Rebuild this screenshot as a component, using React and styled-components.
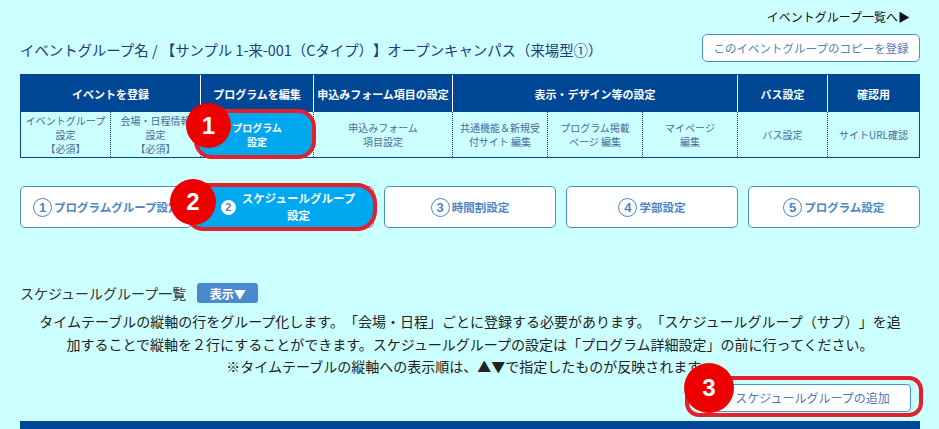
import React from 'react'
import styled, { createGlobalStyle } from 'styled-components';

const GlobalStyle = createGlobalStyle`
  html, body {
    margin: 0;
    padding: 0;
    background: #ccffff;
  }
  body {
    font-family: "Noto Sans CJK JP", "Noto Sans", sans-serif;
    color: #222;
    text-spacing-trim: space-all;
  }
`;

const Page = styled.div`
  width: 900px;
  padding: 9px 19px 0 20px;
  height: 420px;
  overflow: hidden;
`;

const TopLinkRow = styled.div`
  text-align: right;
  padding-right: 10px;
  font-size: 12px;
  line-height: 16px;
  color: #111;
`;

const TitleRow = styled.div`
  display: flex;
  justify-content: space-between;
  align-items: flex-end;
  margin-top: 9px;
`;

const Title = styled.h1`
  margin: 0 0 1px;
  font-size: 14.4px;
  font-weight: 400;
  line-height: 22px;
  color: #1e3a78;
`;

const CopyButton = styled.button`
  width: 218px;
  height: 28px;
  background: #fff;
  border: 1px solid #4a8ed0;
  border-radius: 5px;
  color: #5a7ab8;
  font-family: inherit;
  font-size: 11.5px;
  padding: 0;
`;

const NavTable = styled.div`
  margin-top: 12px;
  display: grid;
  grid-template-columns: 90px 90px 113px 139px 95px 95px 95px 90px 1fr;
  grid-template-rows: 37px 45px;
  border: 1.5px solid #004896;
`;

const HeadCell = styled.div`
  grid-column: span ${p => p.span || 1};
  background: #004896;
  color: #fff;
  font-size: 11px;
  font-weight: 700;
  white-space: nowrap;
  display: flex;
  align-items: center;
  justify-content: center;
  border-right: ${p => (p.last ? 'none' : '1px solid #fff')};
`;

const BodyCell = styled.div`
  position: relative;
  display: flex;
  align-items: center;
  justify-content: center;
  text-align: center;
  font-size: 10px;
  line-height: 14px;
  color: ${p => (p.active ? '#fff' : '#4a6a9a')};
  font-weight: ${p => (p.active ? 700 : 400)};
  border-right: ${p => (p.last ? 'none' : '1px dotted #004896')};
`;

const CellText = styled.span`
  position: relative;
  z-index: 2;
`;

/* red rounded frame around the currently selected item */
const Highlight = styled.div`
  position: absolute;
  top: ${p => p.t}px;
  left: ${p => p.l}px;
  right: ${p => p.r}px;
  bottom: ${p => p.b}px;
  border: 4px solid #e3202b;
  border-radius: ${p => p.radius || 16}px;
  background: ${p => p.fill || 'transparent'};
  z-index: 1;
`;

const Marker = styled.div`
  position: absolute;
  top: ${p => p.t}px;
  left: ${p => p.l}px;
  width: ${p => p.size}px;
  height: ${p => p.size}px;
  border-radius: 50%;
  background: #ee0000;
  color: #fff;
  font-family: "Liberation Sans", Arial, sans-serif;
  font-size: 24px;
  font-weight: 700;
  display: flex;
  align-items: center;
  justify-content: center;
  z-index: 5;
`;

const StepRow = styled.div`
  margin-top: 28px;
  display: grid;
  grid-template-columns: repeat(5, minmax(0, 1fr));
  gap: 9.5px;
`;

const StepButton = styled.div`
  position: relative;
  height: 42px;
  box-sizing: border-box;
  background: #fff;
  border: 1px solid #4a8ed0;
  border-radius: 5px;
  display: flex;
  align-items: center;
  justify-content: ${p => (p.left ? 'flex-start' : 'center')};
  padding-left: ${p => (p.left ? '12px' : '0')};
  color: #4a86c6;
  font-size: 11.5px;
  font-weight: 700;
  white-space: nowrap;
`;

const StepLabel = styled.span`
  position: relative;
  z-index: 2;
  display: flex;
  align-items: center;
  color: ${p => (p.active ? '#fff' : 'inherit')};
  text-align: center;
  line-height: 17px;
`;

const StepNum = styled.span`
  box-sizing: border-box;
  width: ${p => (p.active ? 15 : 19)}px;
  height: ${p => (p.active ? 15 : 19)}px;
  border-radius: 50%;
  border: 1.5px solid ${p => (p.active ? '#fff' : '#4a86c6')};
  background: ${p => (p.active ? '#fff' : 'transparent')};
  color: #4a86c6;
  font-family: "Liberation Sans", Arial, sans-serif;
  font-size: ${p => (p.active ? 11 : 13)}px;
  font-weight: 700;
  display: inline-flex;
  align-items: center;
  justify-content: center;
  margin-right: ${p => (p.active ? 6 : 2)}px;
  flex-shrink: 0;
`;

const SectionHead = styled.div`
  margin-top: 55px;
  display: flex;
  align-items: center;
  gap: 11px;
  font-size: 14px;
  color: #333;
`;

const ToggleBadge = styled.span`
  width: 61px;
  height: 20px;
  background: #4a8acc;
  border-radius: 3px;
  color: #fff;
  font-size: 12px;
  font-weight: 700;
  display: inline-flex;
  align-items: center;
  justify-content: center;
`;

const Note = styled.p`
  margin: 7px 0 0;
  text-align: center;
  font-size: 14px;
  line-height: 22.5px;
  color: #222;
`;

const AddRow = styled.div`
  display: flex;
  justify-content: flex-end;
  padding-right: 9px;
  margin-top: 6px;
`;

const AddButton = styled.div`
  position: relative;
  width: 197px;
  height: 28px;
  box-sizing: border-box;
  background: #fff;
  border: 1px solid #4a8ed0;
  border-radius: 4px;
  display: flex;
  align-items: center;
  justify-content: center;
  color: #4a78b8;
  font-size: 12px;
`;

const BottomBar = styled.div`
  margin-top: 9px;
  height: 10px;
  background: #004896;
`;

const steps = [
  { n: 1, label: 'プログラムグループ設定', left: true },
  { n: 2, label: 'スケジュールグループ', sub: '設定', active: true },
  { n: 3, label: '時間割設定' },
  { n: 4, label: '学部設定' },
  { n: 5, label: 'プログラム設定' },
];

const App = () => {
  return (
    <>
      <GlobalStyle />
      <Page>
        <TopLinkRow>イベントグループ一覧へ▶</TopLinkRow>
        <TitleRow>
          <Title>イベントグループ名 / 【サンプル 1-来-001（Cタイプ）】オープンキャンパス（来場型①）</Title>
          <CopyButton>このイベントグループのコピーを登録</CopyButton>
        </TitleRow>

        <NavTable>
          <HeadCell span={2}>イベントを登録</HeadCell>
          <HeadCell>プログラムを編集</HeadCell>
          <HeadCell>申込みフォーム項目の設定</HeadCell>
          <HeadCell span={3}>表示・デザイン等の設定</HeadCell>
          <HeadCell>バス設定</HeadCell>
          <HeadCell last>確認用</HeadCell>

          <BodyCell><CellText>イベントグループ<br />設定<br />【必須】</CellText></BodyCell>
          <BodyCell><CellText>会場・日程情報<br />設定<br />【必須】</CellText></BodyCell>
          <BodyCell active>
            <Highlight t={-3} l={-7} r={-3} b={-2} radius={18} fill="#00a8f0" />
            <Marker size={45} t={-9} l={-15}>1</Marker>
            <CellText>プログラム<br />設定</CellText>
          </BodyCell>
          <BodyCell><CellText>申込みフォーム<br />項目設定</CellText></BodyCell>
          <BodyCell><CellText>共通機能＆新規受<br />付サイト 編集</CellText></BodyCell>
          <BodyCell><CellText>プログラム掲載<br />ページ 編集</CellText></BodyCell>
          <BodyCell><CellText>マイページ<br />編集</CellText></BodyCell>
          <BodyCell><CellText>バス設定</CellText></BodyCell>
          <BodyCell last><CellText>サイトURL確認</CellText></BodyCell>
        </NavTable>

        <StepRow>
          {steps.map(s => (
            <StepButton key={s.n} left={s.left}>
              {s.active && (
                <>
                  <Highlight t={-4} l={-19} r={-4} b={-4} radius={20} fill="#00a8f0" />
                  <Marker size={46} t={-8} l={-33}>2</Marker>
                </>
              )}
              <StepLabel active={s.active}>
                <StepNum active={s.active}>{s.n}</StepNum>
                {s.sub ? (
                  <span>{s.label}<br />{s.sub}</span>
                ) : (
                  s.label
                )}
              </StepLabel>
            </StepButton>
          ))}
        </StepRow>

        <SectionHead>
          スケジュールグループ一覧
          <ToggleBadge>表示▼</ToggleBadge>
        </SectionHead>

        <Note>
          タイムテーブルの縦軸の行をグループ化します。「会場・日程」ごとに登録する必要があります。「スケジュールグループ（サブ）」を追<br />
          加することで縦軸を２行にすることができます。スケジュールグループの設定は「プログラム詳細設定」の前に行ってください。<br />
          ※タイムテーブルの縦軸への表示順は、▲▼で指定したものが反映されます。
        </Note>

        <AddRow>
          <AddButton>
            <Highlight t={-9} l={-30} r={-13} b={-6} radius={14} />
            <Marker size={50} t={-22} l={-31}>3</Marker>
            スケジュールグループの追加
          </AddButton>
        </AddRow>

        <BottomBar />
      </Page>
    </>
  )
}

export default App
